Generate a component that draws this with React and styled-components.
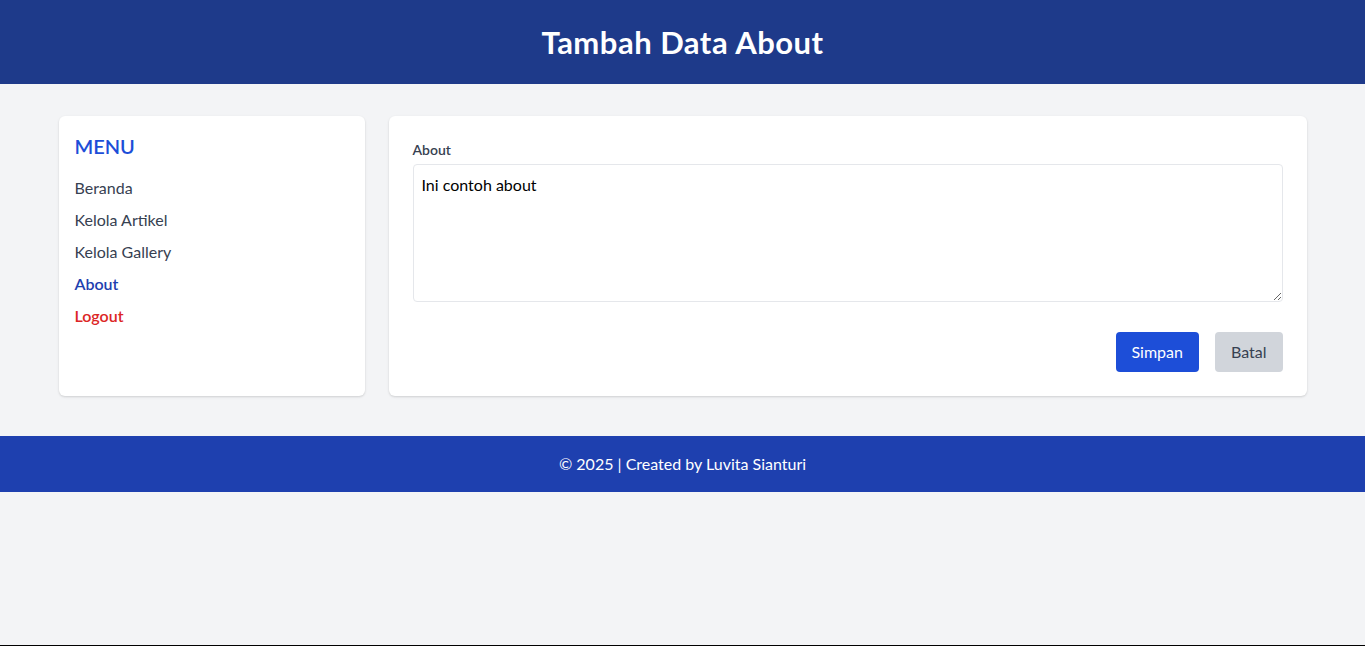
import React from 'react'
import styled, { createGlobalStyle } from 'styled-components'

const GlobalStyle = createGlobalStyle`
   * {
      box-sizing: border-box;
   }
   body {
      margin: 0;
      background-color: #f3f4f6;
      font-family: 'Segoe UI', Lato, 'Noto Sans', sans-serif;
      color: #111827;
   }
`

const Page = styled.div`
   min-height: 100vh;
   display: flex;
   flex-direction: column;
   border-bottom: 1px solid #000;
`

const Header = styled.header`
   background-color: #1e3a8a;
   padding: 24px 0;
   text-align: center;
   h1 {
      margin: 0;
      color: #fff;
      font-size: 31px;
      line-height: 36px;
      letter-spacing: 0.5px;
      font-weight: 700;
   }
`

const Main = styled.main`
   width: 1280px;
   max-width: 100%;
   margin: 0 auto;
   padding: 32px 16px 40px;
   display: flex;
   gap: 24px;
   align-items: stretch;
`

const Card = styled.div`
   background-color: #fff;
   border-radius: 6px;
   box-shadow: 0 1px 3px rgba(0, 0, 0, 0.1), 0 1px 2px rgba(0, 0, 0, 0.06);
`

const Sidebar = styled(Card)`
   width: 306px;
   flex-shrink: 0;
   padding: 16px;
   h2 {
      margin: 0 0 16px;
      font-size: 20px;
      line-height: 28px;
      font-weight: 600;
      color: #1d4ed8;
   }
   ul {
      list-style: none;
      margin: 0;
      padding: 0;
      display: flex;
      flex-direction: column;
      gap: 8px;
   }
`

const MenuLink = styled.a`
   display: block;
   font-size: 16px;
   line-height: 24px;
   text-decoration: none;
   color: ${(p) =>
      p.$variant === 'active' ? '#1e40af' : p.$variant === 'danger' ? '#dc2626' : '#374151'};
   font-weight: ${(p) => (p.$variant ? 600 : 400)};
`

const FormCard = styled(Card)`
   flex: 1;
   padding: 24px;
`

const Label = styled.label`
   display: block;
   font-size: 14px;
   line-height: 20px;
   font-weight: 600;
   color: #374151;
   margin-bottom: 4px;
`

const TextArea = styled.textarea`
   display: block;
   width: 100%;
   height: 138px;
   padding: 8px;
   font-family: inherit;
   font-size: 16px;
   line-height: 24px;
   color: #000;
   border: 1px solid #e5e7eb;
   border-radius: 4px;
   outline: none;
`

const Actions = styled.div`
   display: flex;
   justify-content: flex-end;
   gap: 16px;
   margin-top: 30px;
`

const Button = styled.button`
   padding: 8px 16px;
   font-family: inherit;
   font-size: 16px;
   line-height: 24px;
   border: none;
   border-radius: 4px;
   cursor: pointer;
   background-color: ${(p) => (p.$primary ? '#1d4ed8' : '#d1d5db')};
   color: ${(p) => (p.$primary ? '#fff' : '#374151')};
`

const Footer = styled.footer`
   background-color: #1e40af;
   color: #fff;
   text-align: center;
   padding: 16px 0;
   font-size: 16px;
   line-height: 24px;
`

const menu = [
   { label: 'Beranda' },
   { label: 'Kelola Artikel' },
   { label: 'Kelola Gallery' },
   { label: 'About', variant: 'active' },
   { label: 'Logout', variant: 'danger' },
]

function App() {
   return (
      <Page>
         <GlobalStyle />
         <Header>
            <h1>Tambah Data About</h1>
         </Header>
         <Main>
            <Sidebar>
               <h2>MENU</h2>
               <ul>
                  {menu.map((m) => (
                     <li key={m.label}>
                        <MenuLink href="#" $variant={m.variant}>
                           {m.label}
                        </MenuLink>
                     </li>
                  ))}
               </ul>
            </Sidebar>
            <FormCard>
               <Label htmlFor="about">About</Label>
               <TextArea id="about" defaultValue="Ini contoh about" />
               <Actions>
                  <Button $primary>Simpan</Button>
                  <Button>Batal</Button>
               </Actions>
            </FormCard>
         </Main>
         <Footer>© 2025 | Created by Luvita Sianturi</Footer>
      </Page>
   )
}

export default App
